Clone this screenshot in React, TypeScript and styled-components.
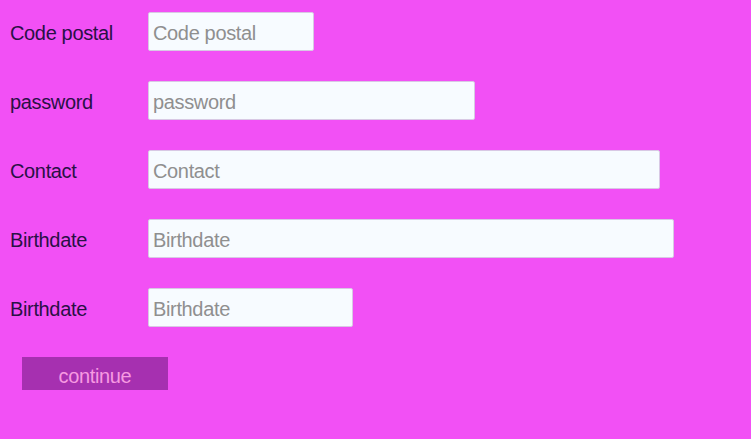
import React from "react";
import styled, { createGlobalStyle } from "styled-components";

const FONT = `"Liberation Sans", Arial, sans-serif`;

const Global = createGlobalStyle`
  html, body { margin: 0; padding: 0; background: #f250f5; }
  body { font-family: ${FONT}; }
`;

const Form = styled.form`
  display: flex;
  flex-direction: column;
  gap: 30px;
  padding: 12px 0 0 10px;
  min-height: 439px;
  box-sizing: border-box;
`;

const Row = styled.div`
  display: flex;
  align-items: center;
  height: 39px;
`;

const Label = styled.label`
  width: 138px;
  padding-top: 4px;
  font-family: ${FONT};
  font-size: 20px;
  letter-spacing: -0.35px;
  color: #2a1046;
`;

const Input = styled.input<{ $w: number }>`
  width: ${(p) => p.$w}px;
  height: 39px;
  box-sizing: border-box;
  border: 1px solid #d8c8e4;
  border-radius: 2px;
  background: #f7fbff;
  padding: 4px 4px 0;
  font-family: ${FONT};
  font-size: 20px;
  letter-spacing: -0.35px;
  color: #333;
  outline: none;
  &::placeholder { color: #8f8f8f; }
`;

const Button = styled.button`
  margin-left: 12px;
  width: 146px;
  height: 33px;
  border: none;
  background: #a630b0;
  color: #f79ae2;
  font-family: ${FONT};
  font-size: 20px;
  letter-spacing: -0.35px;
  padding: 5px 0 0;
`;

const fields = [
  { label: "Code postal", w: 166 },
  { label: "password", w: 327 },
  { label: "Contact", w: 512 },
  { label: "Birthdate", w: 526 },
  { label: "Birthdate", w: 205 },
];

export default function App() {
  return (
    <>
      <Global />
      <Form onSubmit={(e) => e.preventDefault()}>
        {fields.map((f, i) => (
          <Row key={i}>
            <Label>{f.label}</Label>
            <Input $w={f.w} placeholder={f.label} />
          </Row>
        ))}
        <div>
          <Button type="submit">continue</Button>
        </div>
      </Form>
    </>
  );
}
